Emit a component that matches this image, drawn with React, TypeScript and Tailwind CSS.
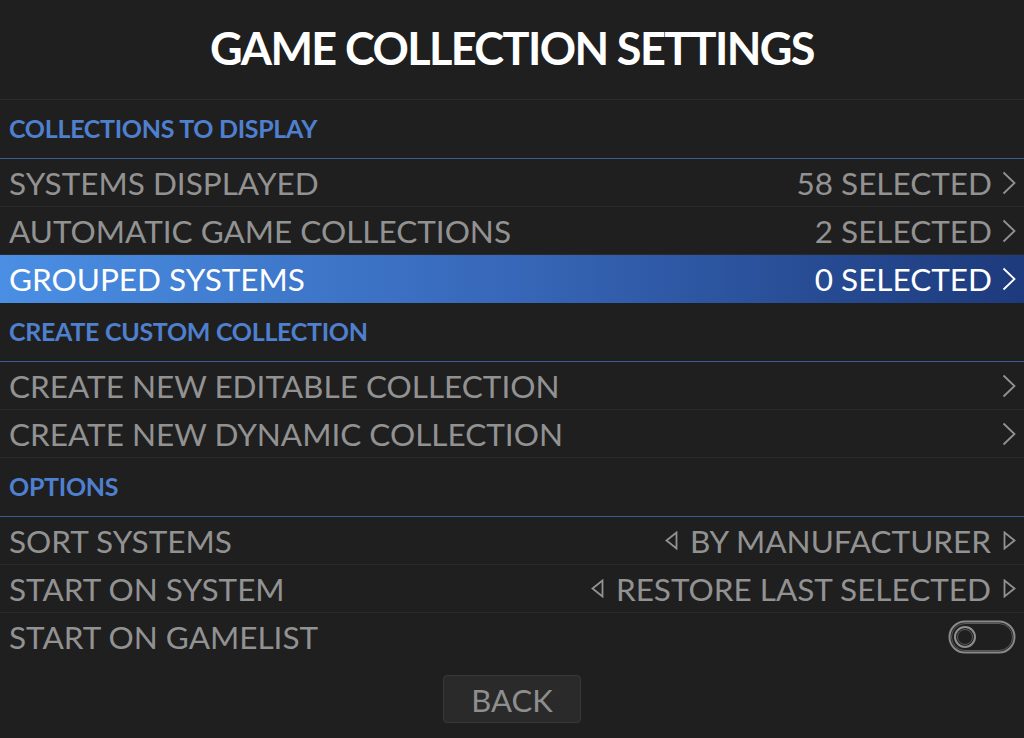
import React from "react";

const Chevron = () => (
  <svg width="14" height="24" viewBox="0 0 14 24" className="ml-[10px] shrink-0">
    <polyline points="1.5,1.5 12.5,12 1.5,22.5" fill="none" stroke="currentColor" strokeWidth="1.8" />
  </svg>
);

const TriLeft = () => (
  <svg width="13" height="19" viewBox="0 0 13 19" className="mr-[12px] shrink-0">
    <polygon points="11.5,1.5 1.5,9.5 11.5,17.5" fill="none" stroke="currentColor" strokeWidth="1.8" />
  </svg>
);

const TriRight = () => (
  <svg width="13" height="19" viewBox="0 0 13 19" className="ml-[12px] shrink-0">
    <polygon points="1.5,1.5 11.5,9.5 1.5,17.5" fill="none" stroke="currentColor" strokeWidth="1.8" />
  </svg>
);

const Toggle = () => (
  <svg width="68" height="34" viewBox="0 0 68 34">
    <rect x="1.5" y="1.5" width="65" height="31" rx="15.5" fill="none" stroke="#8a8a8a" strokeWidth="2" />
    <rect x="3.5" y="3.5" width="61" height="27" rx="13.5" fill="none" stroke="#5a5a5a" strokeWidth="1" />
    <circle cx="17" cy="17" r="10" fill="none" stroke="#8f8f8f" strokeWidth="2" />
    <circle cx="17" cy="17" r="7.5" fill="none" stroke="#5a5a5a" strokeWidth="1" />
  </svg>
);

const Section = ({ title }: { title: string }) => (
  <div className="h-[59px] flex items-center pl-[9px] border-b border-[#3a5c92] text-[#4f80cf] text-[25px] font-bold tracking-[-0.3px]">
    {title}
  </div>
);

const Row = ({
  label,
  value,
  kind,
  active,
  last,
}: {
  label: string;
  value?: string;
  kind: "chevron" | "select" | "toggle";
  active?: boolean;
  last?: boolean;
}) => (
  <div
    className={
      "h-[48px] flex items-center justify-between pl-[9px] pr-[8px] text-[31.5px] " +
      (active
        ? "bg-gradient-to-r from-[#4a8fe4] via-[#3767b8] to-[#1d3a7c] text-white"
        : "text-[#929292]") +
      (last ? "" : " border-b border-[#2a2a2a]")
    }
  >
    <span className="leading-none pt-[2px]">{label}</span>
    <div className="flex items-center">
      {kind === "select" && <TriLeft />}
      {value && <span className="leading-none pt-[2px]">{value}</span>}
      {kind === "chevron" && <Chevron />}
      {kind === "select" && <TriRight />}
      {kind === "toggle" && <Toggle />}
    </div>
  </div>
);

const App = () => {
  return (
    <div className="w-[1024px] h-[738px] bg-[#1f1f1f] flex flex-col font-['Lato',sans-serif] overflow-hidden">
      <div className="h-[100px] flex items-center justify-center border-b border-[#2b2b2b]">
        <h1 className="text-white text-[45px] font-bold tracking-[-1.6px] leading-none pb-[2px]">
          GAME COLLECTION SETTINGS
        </h1>
      </div>
      <Section title="COLLECTIONS TO DISPLAY" />
      <Row label="SYSTEMS DISPLAYED" value="58 SELECTED" kind="chevron" />
      <Row label="AUTOMATIC GAME COLLECTIONS" value="2 SELECTED" kind="chevron" />
      <Row label="GROUPED SYSTEMS" value="0 SELECTED" kind="chevron" active last />
      <Section title="CREATE CUSTOM COLLECTION" />
      <Row label="CREATE NEW EDITABLE COLLECTION" kind="chevron" />
      <Row label="CREATE NEW DYNAMIC COLLECTION" kind="chevron" />
      <Section title="OPTIONS" />
      <Row label="SORT SYSTEMS" value="BY MANUFACTURER" kind="select" />
      <Row label="START ON SYSTEM" value="RESTORE LAST SELECTED" kind="select" />
      <Row label="START ON GAMELIST" kind="toggle" last />
      <div className="flex justify-center pt-[14px]">
        <button className="w-[138px] h-[48px] bg-[#2a2a2a] border border-[#383838] rounded-[4px] text-[#8e8e8e] text-[31px] leading-none pt-[2px]">
          BACK
        </button>
      </div>
    </div>
  );
};

export default App;
